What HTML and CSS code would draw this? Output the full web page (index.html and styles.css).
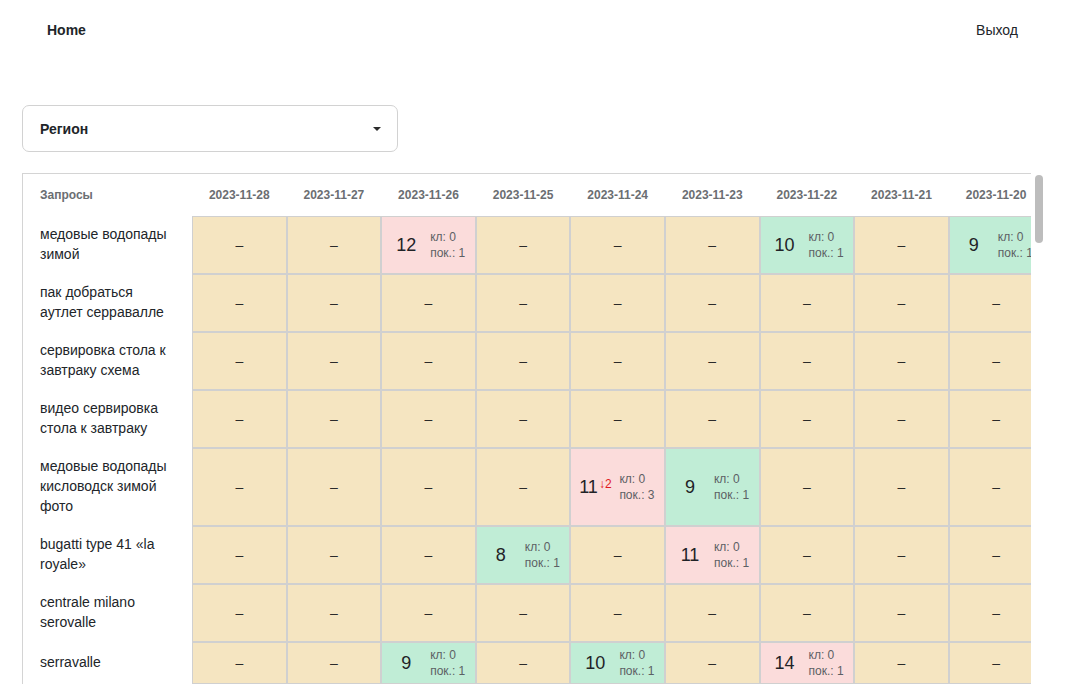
FILE: index.html
```html
<!DOCTYPE html>
<html lang="ru">
<head>
<meta charset="utf-8">
<title>Home</title>
<link rel="stylesheet" href="styles.css">
</head>
<body>
<nav class="navbar">
  <a class="brand" href="#">Home</a>
  <a class="logout" href="#">Выход</a>
</nav>
<main class="main">
  <div class="select">
    <span class="select-label">Регион</span>
    <svg class="caret" width="8" height="4" viewBox="0 0 8 4"><path d="M0 0h8L4 4z" fill="#2b2b2b"/></svg>
  </div>
  <div class="table-frame">
    <div class="table-wrap">
      <table class="grid">
        <thead>
          <tr>
            <th class="q">Запросы</th>
            <th>2023-11-28</th><th>2023-11-27</th><th>2023-11-26</th><th>2023-11-25</th><th>2023-11-24</th><th>2023-11-23</th><th>2023-11-22</th><th>2023-11-21</th><th>2023-11-20</th>
          </tr>
        </thead>
        <tbody>
          <tr>
            <td class="label">медовые водопады зимой</td>
            <td class="c">–</td><td class="c">–</td>
            <td class="c bad"><div class="pos"><span class="num">12</span><span class="stats">кл: 0<br>пок.: 1</span></div></td>
            <td class="c">–</td><td class="c">–</td><td class="c">–</td>
            <td class="c good"><div class="pos"><span class="num">10</span><span class="stats">кл: 0<br>пок.: 1</span></div></td>
            <td class="c">–</td>
            <td class="c good"><div class="pos"><span class="num">9</span><span class="stats">кл: 0<br>пок.: 1</span></div></td>
          </tr>
          <tr>
            <td class="label">пак добраться аутлет серравалле</td>
            <td class="c">–</td><td class="c">–</td><td class="c">–</td><td class="c">–</td><td class="c">–</td><td class="c">–</td><td class="c">–</td><td class="c">–</td><td class="c">–</td>
          </tr>
          <tr>
            <td class="label">сервировка стола к завтраку схема</td>
            <td class="c">–</td><td class="c">–</td><td class="c">–</td><td class="c">–</td><td class="c">–</td><td class="c">–</td><td class="c">–</td><td class="c">–</td><td class="c">–</td>
          </tr>
          <tr>
            <td class="label">видео сервировка стола к завтраку</td>
            <td class="c">–</td><td class="c">–</td><td class="c">–</td><td class="c">–</td><td class="c">–</td><td class="c">–</td><td class="c">–</td><td class="c">–</td><td class="c">–</td>
          </tr>
          <tr>
            <td class="label">медовые водопады кисловодск зимой фото</td>
            <td class="c">–</td><td class="c">–</td><td class="c">–</td><td class="c">–</td>
            <td class="c bad"><div class="pos"><span class="num">11<sup class="delta">↓2</sup></span><span class="stats">кл: 0<br>пок.: 3</span></div></td>
            <td class="c good"><div class="pos"><span class="num">9</span><span class="stats">кл: 0<br>пок.: 1</span></div></td>
            <td class="c">–</td><td class="c">–</td><td class="c">–</td>
          </tr>
          <tr>
            <td class="label">bugatti type 41 «la royale»</td>
            <td class="c">–</td><td class="c">–</td><td class="c">–</td>
            <td class="c good"><div class="pos"><span class="num">8</span><span class="stats">кл: 0<br>пок.: 1</span></div></td>
            <td class="c">–</td>
            <td class="c bad"><div class="pos"><span class="num">11</span><span class="stats">кл: 0<br>пок.: 1</span></div></td>
            <td class="c">–</td><td class="c">–</td><td class="c">–</td>
          </tr>
          <tr>
            <td class="label">centrale milano serovalle</td>
            <td class="c">–</td><td class="c">–</td><td class="c">–</td><td class="c">–</td><td class="c">–</td><td class="c">–</td><td class="c">–</td><td class="c">–</td><td class="c">–</td>
          </tr>
          <tr>
            <td class="label">serravalle</td>
            <td class="c">–</td><td class="c">–</td>
            <td class="c good"><div class="pos"><span class="num">9</span><span class="stats">кл: 0<br>пок.: 1</span></div></td>
            <td class="c">–</td>
            <td class="c good"><div class="pos"><span class="num">10</span><span class="stats">кл: 0<br>пок.: 1</span></div></td>
            <td class="c">–</td>
            <td class="c bad"><div class="pos"><span class="num">14</span><span class="stats">кл: 0<br>пок.: 1</span></div></td>
            <td class="c">–</td><td class="c">–</td>
          </tr>
        </tbody>
      </table>
    </div>
    <div class="vscroll"><div class="vscroll-thumb"></div></div>
  </div>
</main>
</body>
</html>
```

FILE: styles.css
```css
* {
  box-sizing: border-box;
}

html,
body {
  margin: 0;
}

body {
  font-family: "Liberation Sans", Arial, Helvetica, sans-serif;
  font-size: 14px;
  line-height: 20px;
  color: #212529;
  background: #ffffff;
}

.navbar {
  display: flex;
  justify-content: space-between;
  align-items: center;
  height: 60px;
  padding: 0 58px 0 47px;
}

.brand {
  font-weight: 700;
  color: #212529;
  text-decoration: none;
}

.logout {
  color: #212529;
  text-decoration: none;
}

.main {
  padding: 45px 30px 0 22px;
}

.select {
  width: 376px;
  height: 47px;
  border: 1px solid #d2d2d2;
  border-radius: 7px;
  display: flex;
  align-items: center;
  justify-content: space-between;
  padding: 0 16px 0 17px;
}

.select-label {
  font-weight: 700;
}

.caret {
  display: block;
  margin-top: 1px;
}

.table-frame {
  margin-top: 21px;
  display: flex;
  align-items: flex-start;
}

.table-wrap {
  flex: 1;
  min-width: 0;
  overflow: hidden;
}

.vscroll {
  width: 15px;
  flex: none;
  padding: 2px 3px 0 4px;
}

.vscroll-thumb {
  height: 68px;
  border-radius: 4px;
  background: #bdbdbd;
}

.grid {
  border-collapse: separate;
  border-spacing: 0;
  table-layout: fixed;
  width: 1021.4px;
  border-top: 1px solid #d4d4d4;
  border-left: 1px solid #d4d4d4;
}

.grid th {
  width: 94.6px;
  height: 42px;
  padding: 0;
  font-size: 12px;
  font-weight: 700;
  color: #6b6e72;
  text-align: center;
  vertical-align: middle;
  white-space: nowrap;
}

.grid th.q {
  width: 169px;
  text-align: left;
  padding-left: 17px;
}

.label {
  padding: 8px 17px 10px;
  vertical-align: middle;
  text-align: left;
  color: #212529;
}

.c {
  border: 1px solid #d0d0d0;
  padding: 4px 0;
  text-align: center;
  vertical-align: middle;
  background: #f5e5c1;
  color: #2a2a2a;
}

.c.bad {
  background: #fbdcdb;
}

.c.good {
  background: #c0edd6;
}

.pos {
  display: grid;
  grid-template-columns: 48px 1fr;
  align-items: center;
  text-align: left;
}

.num {
  font-size: 18px;
  line-height: 22px;
  text-align: center;
  white-space: nowrap;
  color: #1f2327;
}

.delta {
  font-size: 12px;
  line-height: 1;
  color: #e0181e;
  vertical-align: 5px;
  margin-left: 1px;
}

.stats {
  font-size: 12px;
  line-height: 16px;
  color: #5c6064;
  white-space: nowrap;
}
```
